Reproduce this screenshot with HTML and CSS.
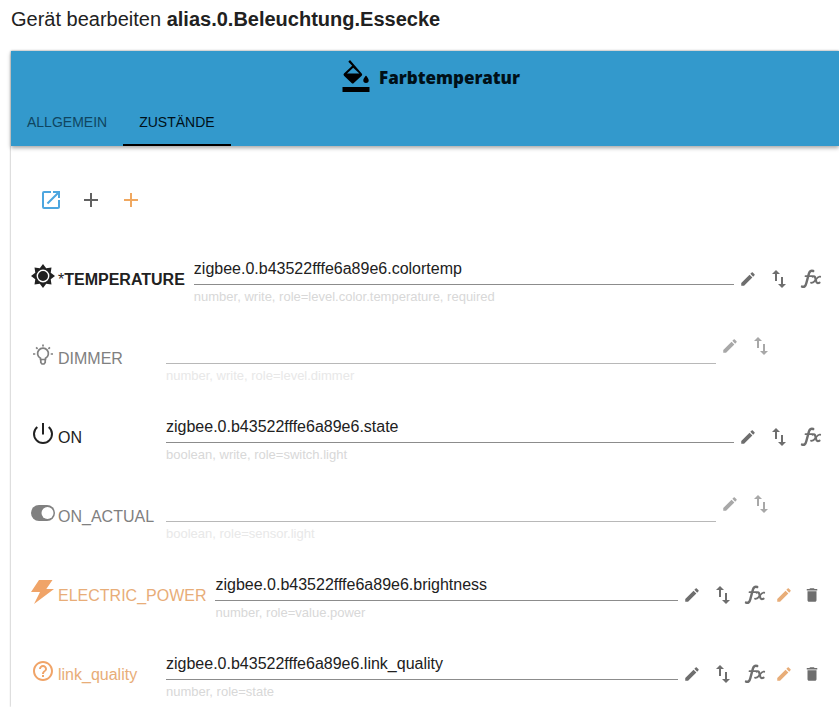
FILE: index.html
```html
<!DOCTYPE html>
<html lang="de">
<head>
<meta charset="utf-8">
<meta name="viewport" content="width=device-width, initial-scale=1">
<title>Gerät bearbeiten</title>
<link rel="stylesheet" href="styles.css">
</head>
<body>
<svg class="sprite" aria-hidden="true">
  <symbol id="pencil" viewBox="0 0 24 24"><path d="M3 17.250V21h3.750L17.810 9.940l-3.750-3.750L3 17.250zM20.710 7.040c.39-.39.39-1.020 0-1.410l-2.340-2.340c-.39-.39-1.020-.39-1.410 0l-1.830 1.830 3.750 3.750 1.830-1.830z"/></symbol>
  <symbol id="swap" viewBox="0 0 24 24"><path d="M9 3 5 7h3v7h2V7h3L9 3zm7 14v-7h-2v7h-3l4 4 4-4h-3z"/></symbol>
  <symbol id="trash" viewBox="0 0 24 24"><path d="M6 19c0 1.100.9 2 2 2h8c1.100 0 2-.9 2-2V7H6v12zM19 4h-3.500l-1-1h-5l-1 1H5v2h14V4z"/></symbol>
  <symbol id="fx" viewBox="0 0 22 20"><g fill="none" stroke="currentColor" stroke-linecap="round"><path d="M2 17.600c2.400.8 3.600-.6 4.300-3.400L8.900 4.600c.7-2.500 2.200-3.300 4.300-2.600" stroke-width="2.400"/><path d="M5.500 7.200H12" stroke-width="1.800"/><path d="M12.600 7.600c1.600-.8 2.300 0 2.700 1.400l1 3.700c.4 1.500 1.500 1.700 3.200 1" stroke-width="2.200"/><path d="M20.200 7.700c-2-.7-2.900.6-4.500 3s-2.700 3.700-4.700 3" stroke-width="1.800"/></g></symbol>
  <symbol id="plus" viewBox="0 0 24 24"><path d="M19 13h-6v6h-2v-6H5v-2h6V5h2v6h6v2z"/></symbol>
</svg>

<h1 class="page-title">Gerät bearbeiten <strong>alias.0.Beleuchtung.Essecke</strong></h1>

<main class="panel">
  <header class="panel-header">
    <div class="device">
      <svg class="device-icon" viewBox="0 0 28 32" aria-hidden="true"><path d="M8 0 6.300 1.700l3.900 4L2 13.600a1.600 1.600 0 0 0 0 2.200l7.600 7.300a1.600 1.600 0 0 0 2.200 0l7.900-7.300a1.600 1.600 0 0 0 0-2.200L8 0zM5 13.600l6.200-5.800 6.200 5.800H5zM24 15.500s-2.700 2.900-2.700 4.700a2.700 2.700 0 0 0 5.400 0c0-1.800-2.700-4.700-2.700-4.700zM.5 27h27v5H.5z"/></svg>
      <span>Farbtemperatur</span>
    </div>
    <nav class="tabs" role="tablist">
      <button class="tab" role="tab" aria-selected="false">ALLGEMEIN</button>
      <button class="tab tab-active" role="tab" aria-selected="true">ZUSTÄNDE</button>
    </nav>
  </header>

  <div class="toolbar">
    <button class="tool tool-blue" aria-label="Öffnen"><svg viewBox="0 0 24 24"><path d="M19 19H5V5h7V3H5a2 2 0 0 0-2 2v14a2 2 0 0 0 2 2h14c1.100 0 2-.9 2-2v-7h-2v7zM14 3v2h3.590l-9.830 9.830 1.410 1.410L19 6.410V10h2V3h-7z"/></svg></button>
    <button class="tool" aria-label="Hinzufügen"><svg><use href="#plus"/></svg></button>
    <button class="tool tool-orange" aria-label="Eigenen Zustand hinzufügen"><svg><use href="#plus"/></svg></button>
  </div>

  <div class="states">
    <div class="state">
      <label class="name required" for="temperature"><svg class="name-icon" viewBox="0 0 24 24"><path d="M12 0l3.200 4.300 5.300-.8-.8 5.300L24 12l-4.300 3.200.8 5.300-5.300-.8L12 24l-3.200-4.300-5.300.8.8-5.300L0 12l4.300-3.200-.8-5.300 5.300.8z"/><circle cx="12" cy="12" r="5.700" fill="none" stroke="#fff" stroke-width="1.400"/></svg><span><span class="star">*</span>TEMPERATURE</span></label>
      <div class="field"><input id="temperature" type="text" value="zigbee.0.b43522fffe6a89e6.colortemp"><p>number, write, role=level.color.temperature, required</p></div>
      <div class="actions">
        <button class="act" aria-label="Bearbeiten"><svg><use href="#pencil"/></svg></button>
        <button class="act act-swap" aria-label="Lesen und Schreiben"><svg><use href="#swap"/></svg></button>
        <button class="act act-fx" aria-label="Funktion"><svg><use href="#fx"/></svg></button>
      </div>
    </div>

    <div class="state muted">
      <label class="name" for="dimmer"><svg class="name-icon" viewBox="0 0 24 24"><path d="M9.500 16.500v-1.200a5.400 5.400 0 1 1 5 0v1.200zM9.800 16.500v3l1.200 1.500h2l1.200-1.500v-3M12 1.500v2M5.100 4.400l1.500 1.500M18.900 4.400l-1.500 1.500M2 11h2.300M19.700 11H22" fill="none" stroke="currentColor" stroke-width="1.700"/></svg><span>DIMMER</span></label>
      <div class="field"><input id="dimmer" type="text" value=""><p>number, write, role=level.dimmer</p></div>
      <div class="actions">
        <button class="act" aria-label="Bearbeiten"><svg><use href="#pencil"/></svg></button>
        <button class="act act-swap" aria-label="Lesen und Schreiben"><svg><use href="#swap"/></svg></button>
      </div>
    </div>

    <div class="state">
      <label class="name" for="on"><svg class="name-icon" viewBox="0 0 24 24"><path d="M12 1v11.500M6.300 5a9 9 0 1 0 11.400 0" fill="none" stroke="currentColor" stroke-width="2"/></svg><span>ON</span></label>
      <div class="field"><input id="on" type="text" value="zigbee.0.b43522fffe6a89e6.state"><p>boolean, write, role=switch.light</p></div>
      <div class="actions">
        <button class="act" aria-label="Bearbeiten"><svg><use href="#pencil"/></svg></button>
        <button class="act act-swap" aria-label="Lesen und Schreiben"><svg><use href="#swap"/></svg></button>
        <button class="act act-fx" aria-label="Funktion"><svg><use href="#fx"/></svg></button>
      </div>
    </div>

    <div class="state muted">
      <label class="name" for="on-actual"><svg class="name-icon" viewBox="0 0 24 24"><rect y="4" width="24" height="16" rx="8"/><circle cx="16.500" cy="12" r="6" fill="#fff"/></svg><span>ON_ACTUAL</span></label>
      <div class="field"><input id="on-actual" type="text" value=""><p>boolean, role=sensor.light</p></div>
      <div class="actions">
        <button class="act" aria-label="Bearbeiten"><svg><use href="#pencil"/></svg></button>
        <button class="act act-swap" aria-label="Lesen und Schreiben"><svg><use href="#swap"/></svg></button>
      </div>
    </div>

    <div class="state custom">
      <label class="name" for="power"><svg class="name-icon" viewBox="0 0 24 24"><path d="M8 0h13.500l-6.200 9H23L3 24l6-12H0z"/></svg><span>ELECTRIC_POWER</span></label>
      <div class="field"><input id="power" type="text" value="zigbee.0.b43522fffe6a89e6.brightness"><p>number, role=value.power</p></div>
      <div class="actions">
        <button class="act" aria-label="Bearbeiten"><svg><use href="#pencil"/></svg></button>
        <button class="act act-swap" aria-label="Lesen und Schreiben"><svg><use href="#swap"/></svg></button>
        <button class="act act-fx" aria-label="Funktion"><svg><use href="#fx"/></svg></button>
        <button class="act act-orange" aria-label="Zustand bearbeiten"><svg><use href="#pencil"/></svg></button>
        <button class="act" aria-label="Löschen"><svg><use href="#trash"/></svg></button>
      </div>
    </div>

    <div class="state custom">
      <label class="name" for="link-quality"><svg class="name-icon" viewBox="0 0 24 24"><path d="M11 18h2v-2h-2v2zm1-16C6.480 2 2 6.480 2 12s4.480 10 10 10 10-4.480 10-10S17.520 2 12 2zm0 18c-4.410 0-8-3.590-8-8s3.590-8 8-8 8 3.590 8 8-3.590 8-8 8zm0-14c-2.210 0-4 1.790-4 4h2c0-1.100.9-2 2-2s2 .9 2 2c0 2-3 1.750-3 5h2c0-2.250 3-2.500 3-5 0-2.210-1.790-4-4-4z"/></svg><span>link_quality</span></label>
      <div class="field"><input id="link-quality" type="text" value="zigbee.0.b43522fffe6a89e6.link_quality"><p>number, role=state</p></div>
      <div class="actions">
        <button class="act" aria-label="Bearbeiten"><svg><use href="#pencil"/></svg></button>
        <button class="act act-swap" aria-label="Lesen und Schreiben"><svg><use href="#swap"/></svg></button>
        <button class="act act-fx" aria-label="Funktion"><svg><use href="#fx"/></svg></button>
        <button class="act act-orange" aria-label="Zustand bearbeiten"><svg><use href="#pencil"/></svg></button>
        <button class="act" aria-label="Löschen"><svg><use href="#trash"/></svg></button>
      </div>
    </div>
  </div>
</main>
</body>
</html>
```
FILE: styles.css
```css
* { box-sizing: border-box; }

body {
  margin: 0;
  min-height: 100vh;
  display: flex;
  flex-direction: column;
  background: #fff;
  color: #212121;
  font-family: "Liberation Sans", Arial, sans-serif;
  font-size: 16px;
}

svg { fill: currentColor; flex: none; }

.sprite { display: none; }

button {
  border: 0;
  padding: 0;
  background: none;
  color: inherit;
  font: inherit;
  cursor: pointer;
}

.page-title {
  margin: 0;
  padding: 7px 11px 20px;
  font-size: 20px;
  line-height: 24px;
  font-weight: 400;
}

.panel {
  flex: 1;
  margin-left: 11px;
  box-shadow: 0 0 2px rgba(0, 0, 0, .4);
}

.panel-header {
  background: #3399cc;
  color: #000;
  box-shadow: 0 2px 4px rgba(0, 0, 0, .35);
}

.device {
  height: 47px;
  padding: 9px 0 0 12px;
  display: flex;
  justify-content: center;
  align-items: flex-start;
  gap: 9px;
  color: #001018;
  font-family: "Noto Sans", "Open Sans", sans-serif;
  font-size: 17px;
  font-weight: 900;
  line-height: 36px;
}

.device-icon { width: 28px; height: 32px; color: #000; }

.tabs { display: flex; }

.tab {
  height: 48px;
  padding: 2px 16px 0;
  border-bottom: 2px solid transparent;
  color: #0f4560;
  font-size: 14px;
}

.tab-active { color: #001018; border-bottom-color: #000; }

.toolbar {
  display: flex;
  padding: 34px 20px 33px;
}

.tool {
  width: 40px;
  height: 40px;
  display: grid;
  place-items: center;
  color: #616161;
}

.tool svg { width: 24px; height: 24px; }
.tool-blue { color: #4da6df; }
.tool-orange { color: #f0a860; }

.states {
  display: flex;
  flex-direction: column;
  gap: 24px;
  padding: 0 13px 4px 20px;
}

.state { display: flex; height: 55px; }

.name {
  min-width: 126px;
  margin-right: 9px;
  padding-bottom: 2px;
  display: flex;
  align-items: center;
  gap: 3px;
}

.name-icon { width: 24px; height: 24px; margin-bottom: 7px; }
.required { font-weight: 700; }
.star { font-weight: 400; }
.muted .name { color: #808080; }
.custom .name { color: #e8ad78; }
.custom .name-icon { color: #f0a468; }

.field { flex: 1; min-width: 0; }

.field input {
  display: block;
  width: 100%;
  height: 32px;
  padding: 1px 0 0;
  border: 0;
  border-bottom: 1px solid #8c8c8c;
  border-radius: 0;
  outline: 0;
  background: none;
  color: #212121;
  font: inherit;
}

.field p {
  margin: 2px 0 0;
  color: #d8d8d8;
  font-size: 13px;
  line-height: 20px;
}

.muted .field input { border-color: #b8b8b8; }
.muted .field p { color: #e8e8e8; }

.actions {
  display: flex;
  align-items: center;
  padding-bottom: 4px;
  color: #6e6e6e;
}

.muted .actions {
  align-items: flex-start;
  margin-right: 48px;
  color: #a8a8a8;
}

.act {
  width: 28px;
  height: 28px;
  display: grid;
  place-items: center;
}

.act svg { width: 18px; height: 18px; }
.act-swap { width: 34px; }
.act-swap svg { width: 24px; height: 24px; }
.act-fx { width: 30px; }
.act-fx svg { width: 22px; height: 20px; }
.act-orange { color: #e8ad78; }
```
